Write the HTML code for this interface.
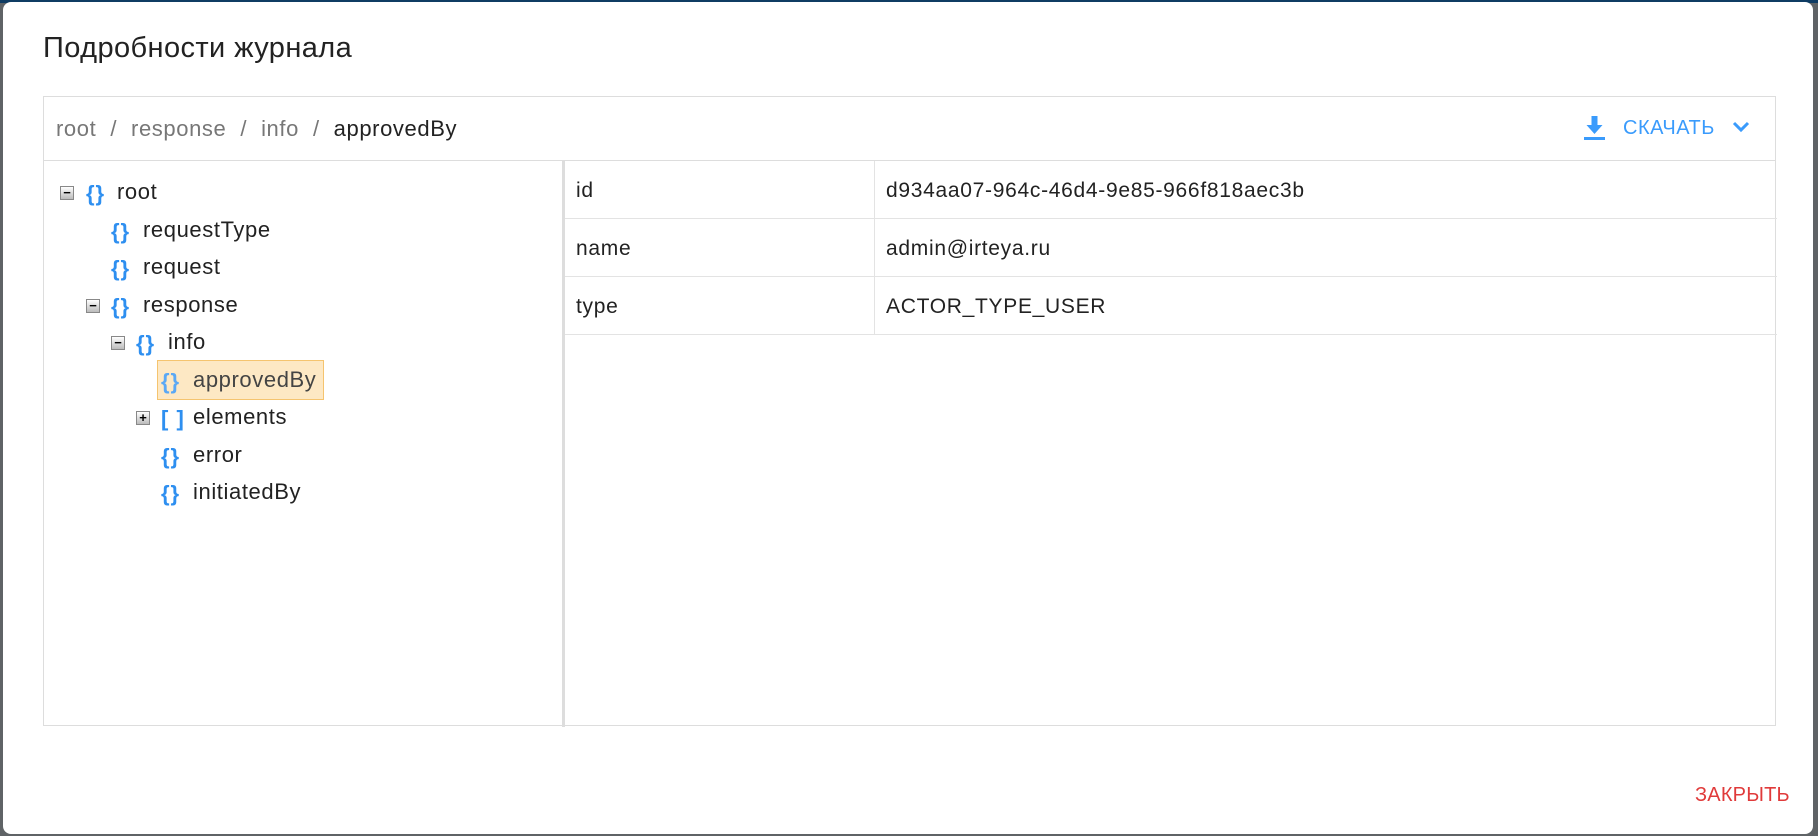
<!DOCTYPE html>
<html><head><meta charset="utf-8"><style>
*{box-sizing:border-box;margin:0;padding:0}
body{width:1818px;height:836px;overflow:hidden;background:#5f6366;font-family:"Liberation Sans",sans-serif;position:relative}
.top{position:absolute;left:0;top:0;width:1818px;height:3px;background:#0f3c63}
.dlg{position:absolute;left:3px;top:2px;width:1810px;height:832px;background:#fff;border-radius:8px}
.a{position:absolute;white-space:nowrap}
.t{font-size:29px;letter-spacing:0.4px;color:#222;left:40px;top:30px}
.panel{position:absolute;left:40px;top:94px;width:1733px;height:630px;border:1px solid #ddd}
.hdr{position:absolute;left:0;top:0;width:100%;height:64px;border-bottom:1px solid #ddd}
.bc{font-size:22px;letter-spacing:0.6px;color:#777;left:12px;top:19px}
.bc b{font-weight:normal;color:#222}
.bc i{font-style:normal;margin:0 14px}
.dl{color:#3a9bfc;font-size:20px;letter-spacing:0.5px;left:1579px;top:20px}
.split{position:absolute;left:518px;top:64px;width:3px;height:566px;background:#ddd}
.row{position:absolute;font-size:22px;letter-spacing:0.6px;color:#222;height:38px;line-height:38px}
.br{position:absolute;color:#2e8ff0;font-size:22px;line-height:38px;height:38px;letter-spacing:1px;font-weight:bold;margin-top:2px}
.tg{position:absolute;width:14px;height:14px;border:1px solid #888;background:linear-gradient(#fff,#bbb);font-size:13px;line-height:11px;text-align:center;color:#000;font-weight:bold}
.tbl{position:absolute;left:521px;top:64px;width:1212px}
.tr{height:58px;border-bottom:1px solid #e3e3e3;position:relative;font-size:21px;letter-spacing:0.7px;color:#222}
.tr span{position:absolute;top:18px}
.cd{position:absolute;left:830px;top:64px;width:1px;height:174px;background:#e3e3e3}
.close{color:#e03a3a;font-size:20px;letter-spacing:0.2px;left:1692px;top:782px}
</style></head><body>
<div class="top"></div>
<div class="dlg">
<div class="a t">Подробности журнала</div>
<div class="panel">
 <div class="hdr">
  <div class="a bc">root<i>/</i>response<i>/</i>info<i>/</i><b>approvedBy</b></div>
  <svg class="a" style="left:1540px;top:19px" width="21" height="25" viewBox="0 0 21 25"><path d="M7.5 0h6v9h5l-8 9-8-9h5z" fill="#3a9bfc"/><rect x="0" y="21" width="21" height="3" fill="#3a9bfc"/></svg>
  <div class="a dl">СКАЧАТЬ</div>
  <svg class="a" style="left:1688px;top:24px" width="18" height="12" viewBox="0 0 18 12"><path d="M2 2l7 7 7-7" stroke="#3a9bfc" stroke-width="3" fill="none"/></svg>
 </div>
 <div class="split"></div>

 <div class="tg" style="left:16px;top:89px">−</div>
 <div class="br" style="left:42px;top:76px">{}</div><div class="row" style="left:73px;top:76px">root</div>

 <div class="br" style="left:67px;top:114px">{}</div><div class="row" style="left:99px;top:114px">requestType</div>

 <div class="br" style="left:67px;top:151px">{}</div><div class="row" style="left:99px;top:151px">request</div>

 <div class="tg" style="left:42px;top:202px">−</div>
 <div class="br" style="left:67px;top:189px">{}</div><div class="row" style="left:99px;top:189px">response</div>

 <div class="tg" style="left:67px;top:239px">−</div>
 <div class="br" style="left:92px;top:226px">{}</div><div class="row" style="left:124px;top:226px">info</div>

 <div class="a" style="left:113px;top:263px;width:167px;height:40px;background:#fde8c4;border:1px solid #f5c46f"></div>
 <div class="br" style="left:117px;top:264px;color:#5aa8f5">{}</div><div class="row" style="left:149px;top:264px;color:#444">approvedBy</div>

 <div class="tg" style="left:92px;top:314px">+</div>
 <div class="br" style="left:117px;top:301px">[ ]</div><div class="row" style="left:149px;top:301px">elements</div>

 <div class="br" style="left:117px;top:339px">{}</div><div class="row" style="left:149px;top:339px">error</div>

 <div class="br" style="left:117px;top:376px">{}</div><div class="row" style="left:149px;top:376px">initiatedBy</div>

 <div class="tbl">
  <div class="tr"><span style="left:11px">id</span><span style="left:321px">d934aa07-964c-46d4-9e85-966f818aec3b</span></div>
  <div class="tr"><span style="left:11px">name</span><span style="left:321px">admin@irteya.ru</span></div>
  <div class="tr"><span style="left:11px">type</span><span style="left:321px">ACTOR_TYPE_USER</span></div>
 </div>
 <div class="cd"></div>
</div>
<div class="a close">ЗАКРЫТЬ</div>
</div>
</body></html>
